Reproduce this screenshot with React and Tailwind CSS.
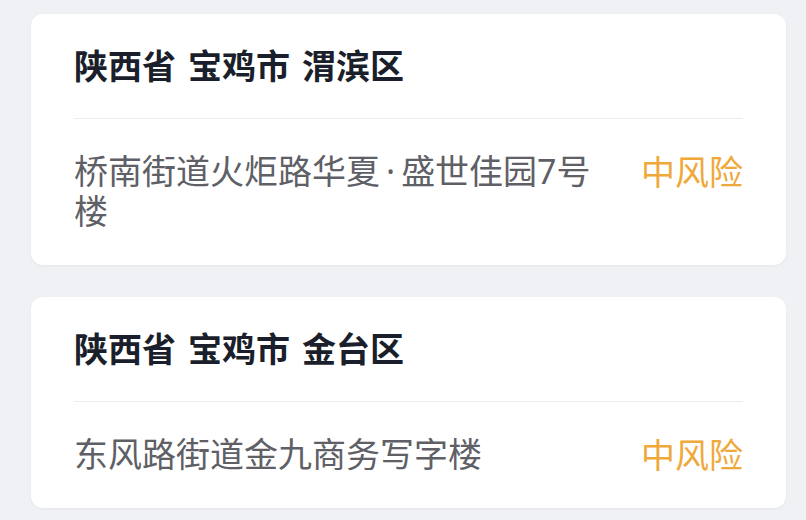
import { Fragment } from 'react';

const areas = [
  { region: ['陕西省', '宝鸡市', '渭滨区'], address: '桥南街道火炬路华夏·盛世佳园7号楼', risk: '中风险' },
  { region: ['陕西省', '宝鸡市', '金台区'], address: '东风路街道金九商务写字楼', risk: '中风险' },
];

function Address({ text }) {
  // the middle dot is narrow in the original, with a bit of air on each side
  return text.split('·').map((p, i) => (
    <Fragment key={i}>
      {i > 0 && <span className="mx-[6px]">·</span>}
      {p}
    </Fragment>
  ));
}

function AreaCard({ item }) {
  return (
    <div className="bg-white rounded-[12px] px-[43px] pt-[31px] pb-[34px] shadow-[0_1px_3px_rgba(0,0,0,0.05)]">
      <div className="flex gap-[12px] text-[34px] leading-[40px] font-bold text-[#1a1f2b]">
        {item.region.map((r) => (
          <span key={r}>{r}</span>
        ))}
      </div>
      <div className="mt-[33px] h-px bg-[#ececee]" />
      <div className="mt-[32px] flex items-start justify-between gap-[40px]">
        <p
          className="flex-1 text-[34px] leading-[40px] text-[#5e6066]"
          style={{ fontFamily: '"Noto Sans", "Noto Sans CJK SC", sans-serif' }}
        >
          <Address text={item.address} />
        </p>
        <span className="shrink-0 text-[34px] leading-[40px] text-[#efa93a]">{item.risk}</span>
      </div>
    </div>
  );
}

export default function App() {
  return (
    <div
      className="min-h-screen bg-[#eff1f4] pt-[14px] pl-[31px] pr-[20px] flex flex-col gap-[32px]"
      style={{ fontFamily: '"Noto Sans CJK SC", "Noto Sans", sans-serif' }}
    >
      {areas.map((a, i) => (
        <AreaCard key={i} item={a} />
      ))}
    </div>
  );
}
